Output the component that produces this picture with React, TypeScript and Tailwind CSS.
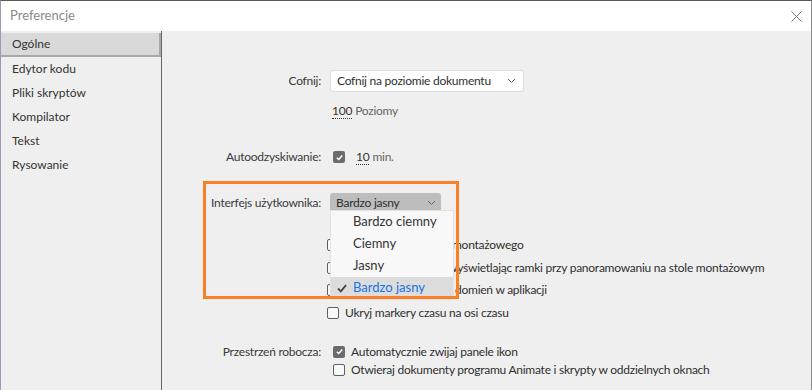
import React from 'react';

const font = { fontFamily: 'Lato, "Noto Sans", sans-serif' };

function Check({ checked }: { checked?: boolean }) {
  if (checked) {
    return (
      <span className="w-[12px] h-[12px] rounded-[2px] bg-[#6b6b6b] flex items-center justify-center shrink-0">
        <svg width="9" height="9" viewBox="0 0 10 10">
          <path d="M2 5.2 L4.2 7.3 L8 2.8" fill="none" stroke="#fff" strokeWidth="1.6" />
        </svg>
      </span>
    );
  }
  return <span className="w-[12px] h-[12px] rounded-[2px] border border-[#5f5f5f] bg-[#f8f8f8] shrink-0" />;
}

function Chevron() {
  return (
    <svg width="9" height="6" viewBox="0 0 9 6">
      <path d="M1 1 L4.5 4.5 L8 1" fill="none" stroke="#666" strokeWidth="1" />
    </svg>
  );
}

function Row({ label, children, className = '' }: { label?: string; children: React.ReactNode; className?: string }) {
  return (
    <div className={`flex items-center ${className}`}>
      <div className="w-[159px] text-right text-[#3a3a3a] whitespace-nowrap">{label}</div>
      <div className="ml-[9px] flex items-center">{children}</div>
    </div>
  );
}

// the head of these rows lies under the open menu
function CheckRow({ head, tail, headW }: { head?: string; tail: string; headW?: string }) {
  return (
    <div className="flex items-center h-[22.5px] pl-[165px]">
      <Check />
      <span className="ml-[6px] text-[#2f2f2f] whitespace-nowrap flex">
        {head && <span className={`${headW} overflow-hidden`}>{head}</span>}
        <span>{tail}</span>
      </span>
    </div>
  );
}

export default function App() {
  const nav = ['Ogólne', 'Edytor kodu', 'Pliki skryptów', 'Kompilator', 'Tekst', 'Rysowanie'];
  const themes = ['Bardzo ciemny', 'Ciemny', 'Jasny', 'Bardzo jasny'];

  return (
    <div style={font} className="w-[812px] h-[390px] overflow-hidden bg-[#efefef] flex flex-col text-[12px] tracking-[-0.25px] border-t border-[#5a5a5a] border-l border-l-[#9a9ab8] border-r border-r-[#8a8a8a]">
      {/* Title bar */}
      <div className="h-[30px] bg-white flex items-center justify-between pl-[9px] pr-[9px] shrink-0 tracking-normal">
        <span className="text-[13px] text-[#8a8a8a]">Preferencje</span>
        <svg width="11" height="11" viewBox="0 0 11 11">
          <path d="M0.5 0.5 L10.5 10.5 M10.5 0.5 L0.5 10.5" stroke="#777" strokeWidth="1" />
        </svg>
      </div>

      <div className="flex flex-1">
        {/* Sidebar */}
        <div className="w-[161px] border-r border-[#666] pt-[2px] shrink-0 tracking-normal">
          {nav.map((n, i) => (
            <div
              key={n}
              className={`h-[24px] flex items-center pl-[11px] text-[#333] ${
                i === 0 ? 'bg-[#d9d9d9] border-r-2 border-b-2 border-[#a8a8a8]' : ''
              }`}
            >
              {n}
            </div>
          ))}
        </div>

        {/* Main */}
        <div className="relative flex-1 pt-[39px]">
          <Row label="Cofnij:">
            <div className="w-[194px] h-[22px] bg-white border border-[#dcdcdc] rounded-[3px] flex items-center justify-between pl-[6px] pr-[7px] text-[#2f2f2f] whitespace-nowrap">
              <span>Cofnij na poziomie dokumentu</span>
              <Chevron />
            </div>
          </Row>
          <Row className="mt-[10px]">
            <span className="ml-[2px] text-[#333] border-b border-dotted border-[#333] leading-[14px]">100</span>
            <span className="ml-[3px] text-[#666]">Poziomy</span>
          </Row>
          <Row label="Autoodzyskiwanie:" className="mt-[28px]">
            <span className="ml-[3px]"><Check checked /></span>
            <span className="ml-[11px] text-[#333] border-b border-dotted border-[#333] leading-[14px]">10</span>
            <span className="ml-[3px] text-[#666]">min.</span>
          </Row>
          <Row label="Interfejs użytkownika:" className="mt-[27px]">
            <div className="w-[111px] h-[19px] bg-[#bdbdbd] rounded-[3px] flex items-center justify-between pl-[6px] pr-[5px] text-[#2f2f2f]">
              <span>Bardzo jasny</span>
              <Chevron />
            </div>
          </Row>

          <div className="mt-[22px]">
            <CheckRow head="Włącz cieniowanie stołu " headW="w-[107px]" tail="montażowego" />
            <CheckRow head="Przyspiesz panoramowanie, " headW="w-[103px]" tail="wyświetlając ramki przy panoramowaniu na stole montażowym" />
            <CheckRow head="Pokazuj liczbę powia" headW="w-[110px]" tail="domień w aplikacji" />
            <CheckRow tail="Ukryj markery czasu na osi czasu" />
          </div>

          <div className="flex items-center h-[17px] mt-[19px]">
            <div className="w-[159px] text-right text-[#3a3a3a] whitespace-nowrap">Przestrzeń robocza:</div>
            <span className="ml-[12px]"><Check checked /></span>
            <span className="ml-[6px] text-[#2f2f2f]">Automatycznie zwijaj panele ikon</span>
          </div>
          <div className="flex items-center h-[17px] pl-[171px] mt-[1px]">
            <Check />
            <span className="ml-[6px] text-[#2f2f2f] whitespace-nowrap">Otwieraj dokumenty programu Animate i skrypty w oddzielnych oknach</span>
          </div>

          {/* Dropdown menu */}
          <div className="absolute left-[168px] top-[179px] w-[124px] bg-[#f8f8f8] border border-[#e2e2e2] text-[13px] tracking-normal text-[#333]">
            {themes.map((t, i) => (
              <div key={t} className={`h-[22px] flex items-center ${i === 3 ? 'bg-[#dcdcdc] text-[#1473e6]' : ''}`}>
                <span className="w-[22px] flex justify-center">
                  {i === 3 && (
                    <svg width="10" height="9" viewBox="0 0 10 9">
                      <path d="M1 4.5 L3.8 7.3 L9 1.2" fill="none" stroke="#444" strokeWidth="1.8" />
                    </svg>
                  )}
                </span>
                <span>{t}</span>
              </div>
            ))}
          </div>

          {/* Orange highlight annotation */}
          <div className="absolute left-[41px] top-[150px] w-[256px] h-[118px] border-[3px] border-[#fb7f28] pointer-events-none" />
        </div>
      </div>
    </div>
  );
}
